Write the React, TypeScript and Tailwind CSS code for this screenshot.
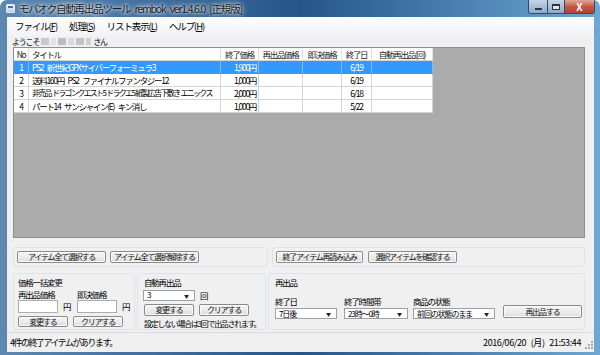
import React from 'react';

type Row = { no: number; title: string; price: string; end: string };

const rows: Row[] = [
  { no: 1, title: 'PS2 新世紀GPXサイバーフォーミュラ3', price: '1,900円', end: '6/19' },
  { no: 2, title: '送料160円 PS2 ファイナルファンタジー12', price: '1,000円', end: '6/19' },
  { no: 3, title: '非売品 ドラゴンクエスト5 ドラクエ5 紙製広告下敷き エニックス', price: '2,000円', end: '6/18' },
  { no: 4, title: 'パート14 サンシャイン(E) キン消し', price: '1,000円', end: '5/22' },
];

function Btn({ children, className }: { children: React.ReactNode; className: string }) {
  return (
    <div
      className={`flex items-center justify-center whitespace-nowrap rounded-[2px] border border-[#8a8a8a] bg-linear-to-b from-[#f4f4f4] via-[#ececec] to-[#dcdcdc] shadow-[inset_0_0_0_1px_#fbfbfb] text-[8px] tracking-[-1.2px] leading-none text-[#111] ${className}`}
    >
      {children}
    </div>
  );
}

function Combo({ value, className }: { value: string; className: string }) {
  return (
    <div className={`flex items-center justify-between whitespace-nowrap border border-[#9aa0a8] bg-white pl-[3px] pr-[6px] leading-none text-[8px] tracking-[-1.1px] ${className}`}>
      <span>{value}</span>
      <span className="text-[5px] text-[#222]">▼</span>
    </div>
  );
}

function Group({ children, className }: { children: React.ReactNode; className: string }) {
  return <div className={`rounded-[3px] border border-[#dde3e8] ${className}`}>{children}</div>;
}

export default function App() {
  return (
    <div className="flex h-[355px] w-[600px] flex-col overflow-hidden rounded-t-[7px] bg-linear-to-r from-[#5c88b2] via-[#24568a] to-[#6fa6d3] font-['Noto_Sans_CJK_JP','Noto_Sans',sans-serif] text-black">
      {/* title bar */}
      <div className="flex h-[17px] shrink-0 items-start">
        <div className="ml-[6px] mt-[4px] h-[9px] w-[9px] rounded-[1px] border border-[#dfe9f3] bg-linear-to-b from-[#f6f9fc] to-[#b9cfe4] p-[1px]">
          <div className="h-[2px] w-full bg-[#3b77b8]" />
        </div>
        <div className="ml-[4px] mt-[2px] whitespace-nowrap text-[10.5px] leading-[13px] tracking-[-1.2px] [word-spacing:3px] text-[#1a1a1a] [text-shadow:0_0_6px_#ffffff,0_0_3px_#ffffff]">
          モバオク自動再出品ツール rembok ver1.4.6.0 [正規版]
        </div>
        <div className="flex-1" />
        <div className="mr-[5px] flex h-[14px] overflow-hidden rounded-b-[3px] border border-t-0 border-[#2d4d70]">
          <div className="flex w-[18px] items-end justify-center bg-linear-to-b from-[#c5d6e8] to-[#8eaacb] pb-[3px]">
            <div className="h-[2px] w-[7px] border border-[#333] bg-white" />
          </div>
          <div className="flex w-[17px] items-center justify-center border-l border-[#2d4d70] bg-linear-to-b from-[#c5d6e8] to-[#8eaacb]">
            <div className="h-[6px] w-[8px] border border-[#333] border-t-2 bg-white/60" />
          </div>
          <div className="flex w-[30px] items-center justify-center border-l border-[#2d4d70] bg-linear-to-b from-[#e3a79a] via-[#c75644] to-[#b3412f] text-[10px] font-bold leading-none text-white">
            X
          </div>
        </div>
      </div>

      {/* client */}
      <div className="ml-[7px] flex w-[587px] flex-1 flex-col bg-[#f0f0f0]">
        {/* menu */}
        <div className="flex h-[19px] shrink-0 items-center gap-[12px] bg-linear-to-b from-[#fcfdfe] to-[#f1f3f6] pl-[8px] text-[9.5px] leading-none tracking-[-1.1px]">
          <span>
            ファイル(<u>F</u>)
          </span>
          <span>
            処理(<u>S</u>)
          </span>
          <span>
            リスト表示(<u>L</u>)
          </span>
          <span>
            ヘルプ(<u>H</u>)
          </span>
        </div>

        {/* welcome */}
        <div className="flex h-[11px] shrink-0 items-center pl-[5px] text-[8px] leading-none tracking-[-1.2px]">
          <span>ようこそ</span>
          <div className="mx-[2px] flex h-[7px] w-[50px] gap-[2px]">
            <div className="w-[8px] bg-[#c9c9c9]" />
            <div className="w-[5px] bg-[#e3e3e3]" />
            <div className="w-[9px] bg-[#bdbdbd]" />
            <div className="w-[6px] bg-[#d8d8d8]" />
            <div className="w-[8px] bg-[#c4c4c4]" />
            <div className="w-[6px] bg-[#cfcfcf]" />
          </div>
          <span>さん</span>
        </div>

        {/* grid */}
        <div className="ml-[6px] h-[191px] w-[572px] shrink-0 border border-[#8a8f98] bg-[#ababab]">
          <div className="w-[419px] text-[8.5px] leading-none tracking-[-1.3px] [word-spacing:3px]">
            <div className="grid h-[13px] grid-cols-[15px_192px_38px_44px_39px_30px_61px] border-b border-[#d4d4d4] bg-white text-[#222]">
              <div className="flex items-center justify-center border-r border-[#e2e2e2]">No</div>
              <div className="flex items-center border-r border-[#e2e2e2] pl-[3px]">タイトル</div>
              <div className="flex items-center justify-center border-r border-[#e2e2e2]">終了価格</div>
              <div className="flex items-center justify-center border-r border-[#e2e2e2]">再出品価格</div>
              <div className="flex items-center justify-center border-r border-[#e2e2e2]">即決価格</div>
              <div className="flex items-center justify-center border-r border-[#e2e2e2]">終了日</div>
              <div className="flex items-center justify-center border-r border-[#e2e2e2]">自動再出品(回)</div>
            </div>
            {rows.map((r) => {
              const sel = r.no === 1;
              return (
                <div
                  key={r.no}
                  className={`grid h-[13px] grid-cols-[15px_192px_38px_44px_39px_30px_61px] border-b ${
                    sel ? 'border-[#3399ff] bg-[#3399ff] text-white' : 'border-[#d4d4d4] bg-white text-black'
                  }`}
                >
                  <div className={`flex items-center justify-center border-r ${sel ? 'border-[#7fbcf9]' : 'border-[#d4d4d4]'}`}>{r.no}</div>
                  <div className={`flex items-center overflow-hidden whitespace-nowrap border-r pl-[3px] ${sel ? 'border-[#7fbcf9]' : 'border-[#d4d4d4]'}`}>
                    <span className={r.no === 3 ? 'text-[8px] tracking-[-1.7px] [word-spacing:1px]' : ''}>{r.title}</span>
                  </div>
                  <div className={`flex items-center justify-end border-r pr-[2px] ${sel ? 'border-[#7fbcf9]' : 'border-[#d4d4d4]'}`}>{r.price}</div>
                  <div className={`border-r ${sel ? 'border-[#7fbcf9]' : 'border-[#d4d4d4]'}`} />
                  <div className={`border-r ${sel ? 'border-[#7fbcf9]' : 'border-[#d4d4d4]'}`} />
                  <div className={`flex items-center justify-center border-r ${sel ? 'border-[#7fbcf9]' : 'border-[#d4d4d4]'}`}>{r.end}</div>
                  <div className={`border-r ${sel ? 'border-[#7fbcf9]' : 'border-[#d4d4d4]'}`} />
                </div>
              );
            })}
          </div>
        </div>

        {/* select buttons */}
        <div className="ml-[6px] mt-[9px] flex h-[20px] w-[572px] shrink-0 gap-[4px]">
          <Group className="flex w-[255px] items-center gap-[4px] pl-[3px]">
            <Btn className="h-[12px] w-[89px]">アイテム全て選択する</Btn>
            <Btn className="h-[12px] w-[89px]">アイテム全て選択解除する</Btn>
          </Group>
          <Group className="flex flex-1 items-center gap-[5px] pl-[3px]">
            <Btn className="h-[12px] w-[87px]">終了アイテム再読み込み</Btn>
            <Btn className="h-[12px] w-[89px]">選択アイテムを確認する</Btn>
          </Group>
        </div>

        {/* bottom groups */}
        <div className="ml-[6px] mt-[6px] flex h-[57px] w-[572px] shrink-0 gap-[2px] text-[8.5px] leading-none tracking-[-1.2px]">
          <Group className="flex w-[122px] flex-col pl-[4px] pt-[4px]">
            <div>価格一括変更</div>
            <div className="mt-[3px] flex">
              <span className="w-[59px]">再出品価格</span>
              <span>即決価格</span>
            </div>
            <div className="mt-[2px] flex items-center">
              <div className="h-[13px] w-[40px] border border-[#abadb3] bg-white" />
              <span className="ml-[5px] w-[14px]">円</span>
              <div className="h-[13px] w-[40px] border border-[#abadb3] bg-white" />
              <span className="ml-[5px]">円</span>
            </div>
            <div className="mt-[3px] flex gap-[5px]">
              <Btn className="h-[11px] w-[50px]">変更する</Btn>
              <Btn className="h-[11px] w-[50px]">クリアする</Btn>
            </div>
          </Group>
          <Group className="flex w-[129px] flex-col pl-[5px] pt-[4px]">
            <div className="pl-[1px]">自動再出品</div>
            <div className="mt-[3px] flex items-center">
              <Combo value="3" className="h-[11px] w-[52px]" />
              <span className="ml-[5px]">回</span>
            </div>
            <div className="mt-[3px] flex gap-[5px] pl-[1px]">
              <Btn className="h-[12px] w-[50px]">変更する</Btn>
              <Btn className="h-[12px] w-[50px]">クリアする</Btn>
            </div>
            <div className="mt-[4px] whitespace-nowrap pl-[1px] text-[8px] tracking-[-1.3px]">設定しない場合は3回で出品されます。</div>
          </Group>
          <Group className="flex flex-1 flex-col pl-[6px] pt-[4px]">
            <div>再出品</div>
            <div className="mt-[10px] flex items-end">
              <div className="flex w-[69px] flex-col">
                <span>終了日</span>
                <Combo value="7日後" className="mt-[3px] h-[11px] w-[62px]" />
              </div>
              <div className="flex w-[69px] flex-col">
                <span>終了時間帯</span>
                <Combo value="23時～0時" className="mt-[3px] h-[11px] w-[64px]" />
              </div>
              <div className="flex w-[90px] flex-col">
                <span>商品の状態</span>
                <Combo value="前回の状態のまま" className="mt-[3px] h-[11px] w-[82px]" />
              </div>
              <Btn className="mb-[1px] h-[13px] w-[79px]">再出品する</Btn>
            </div>
          </Group>
        </div>

        {/* status */}
        <div className="mt-[2px] flex h-[20px] shrink-0 items-center border-t border-[#dadada] pl-[3px] text-[9px] leading-none tracking-[-1.5px]">
          <span>4件の終了アイテムがあります。</span>
          <div className="flex-1" />
          <span className="tracking-[-0.4px] [word-spacing:3px]">2016/06/20 (月) 21:53:44</span>
          <div className="ml-[4px] mr-[1px] mt-[8px] grid grid-cols-3 gap-[1px] self-start">
            <div className="h-[2px] w-[2px]" />
            <div className="h-[2px] w-[2px]" />
            <div className="h-[2px] w-[2px] bg-[#a8a8a8]" />
            <div className="h-[2px] w-[2px]" />
            <div className="h-[2px] w-[2px] bg-[#a8a8a8]" />
            <div className="h-[2px] w-[2px] bg-[#a8a8a8]" />
            <div className="h-[2px] w-[2px] bg-[#a8a8a8]" />
            <div className="h-[2px] w-[2px] bg-[#a8a8a8]" />
            <div className="h-[2px] w-[2px] bg-[#a8a8a8]" />
          </div>
        </div>
      </div>
      <div className="h-[3px] shrink-0" />
    </div>
  );
}
